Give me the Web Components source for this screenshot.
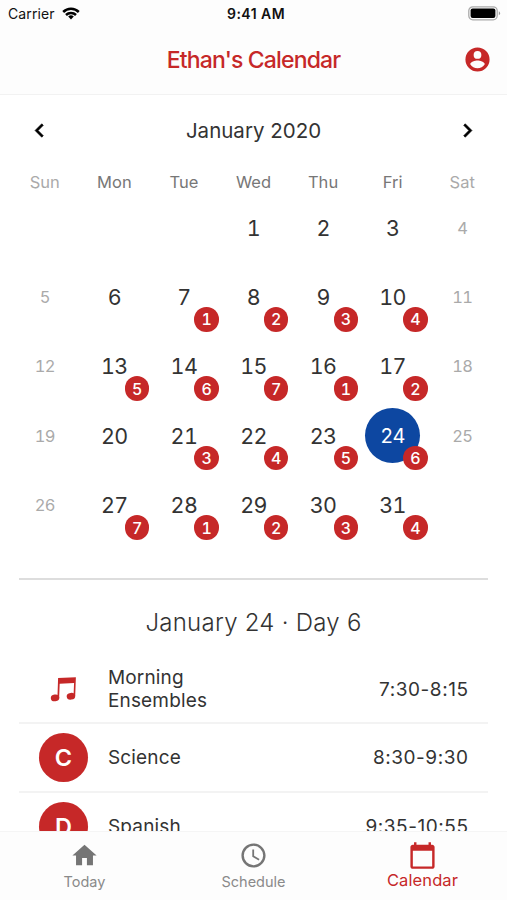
<!DOCTYPE html>
<html lang="en">
<head>
<meta charset="utf-8">
<meta name="viewport" content="width=device-width, initial-scale=1">
<title>Ethan's Calendar</title>
<style>
  body {
    margin: 0;
    font-family: Inter, "Liberation Sans", sans-serif;
    color: #333;
    background: #fff;
    --red: #c62828;
    --blue: #0d47a1;
    --bar: #fdfdfd;
  }
</style>
</head>
<body>
<school-app>
  <status-bar slot="top" carrier="Carrier" time="9:41 AM"></status-bar>
  <title-bar slot="top">Ethan's Calendar</title-bar>

  <month-calendar month="January 2020" first-weekday="3" days="31" selected="24"></month-calendar>

  <day-agenda>
    <span slot="heading">January 24 · Day 6</span>
    <agenda-item time="7:30-8:15" icon="music">Morning Ensembles</agenda-item>
    <agenda-item time="8:30-9:30" letter="C">Science</agenda-item>
    <agenda-item time="9:35-10:55" letter="D">Spanish</agenda-item>
  </day-agenda>

  <tab-bar slot="bottom">
    <tab-item icon="home">Today</tab-item>
    <tab-item icon="clock">Schedule</tab-item>
    <tab-item icon="calendar" active>Calendar</tab-item>
  </tab-bar>
</school-app>

<script>
(function(){
// all on a 24x24 grid
const icons = {
  account: '<path fill-rule="evenodd" d="M12 2a10 10 0 1 0 0 20 10 10 0 0 0 0-20zm0 3a3.2 3.2 0 1 1 0 6.4A3.2 3.2 0 0 1 12 5zm0 14.2a7.2 7.2 0 0 1-6-3.22c.03-1.99 4-3.08 6-3.08s5.97 1.09 6 3.08a7.2 7.2 0 0 1-6 3.22z"/>',
  left: '<path d="M15.41 7.41 14 6l-6 6 6 6 1.41-1.41L10.83 12z" stroke="currentColor" stroke-width=".5"/>',
  right: '<path d="M8.59 16.59 10 18l6-6-6-6-1.41 1.41L13.17 12z" stroke="currentColor" stroke-width=".5"/>',
  home: '<path d="M10 20v-6h4v6h5v-8h3L12 3 2 12h3v8z"/>',
  clock: '<path d="M11.99 2C6.47 2 2 6.48 2 12s4.47 10 9.99 10C17.52 22 22 17.52 22 12S17.52 2 11.99 2zM12 20a8 8 0 1 1 0-16 8 8 0 0 1 0 16zm.5-13H11v6l5.25 3.15.75-1.23-4.5-2.67z"/>',
  calendar: '<path d="M20 3h-1V1h-2v2H7V1H5v2H4c-1.1 0-2 .9-2 2v16c0 1.1.9 2 2 2h16c1.1 0 2-.9 2-2V5c0-1.1-.9-2-2-2zm0 18H4V8h16z"/>',
  music: '<path d="M7.2 1.8 23 1.2 22.4 18h-1.5L21.4 6.2 8.6 6.8 8.1 19.6H6.6z"/><ellipse cx="4.5" cy="19.5" rx="3.8" ry="3" transform="rotate(-8 4.5 19.5)"/><ellipse cx="18.6" cy="18" rx="3.8" ry="3" transform="rotate(-8 18.6 18)"/>'
}

const weekdays = ['Sun', 'Mon', 'Tue', 'Wed', 'Thu', 'Fri', 'Sat']

class SvgIcon extends HTMLElement {
  connectedCallback() {
    this.attachShadow({mode:'open'}).innerHTML = `
      <style>
        :host { display: block; width: 24px; height: 24px; }
        svg { display: block; width: 100%; height: 100%; fill: currentColor; }
      </style>
      <svg viewBox="0 0 24 24">${icons[this.getAttribute('name')]}</svg>
    `
  }
}

class SchoolApp extends HTMLElement {
  connectedCallback() {
    this.attachShadow({mode:'open'}).innerHTML = `
      <style>
        :host { display: flex; flex-direction: column; height: 100vh; overflow: hidden; }
        main { flex: 1; min-height: 0; overflow: hidden; }
      </style>
      <slot name="top"></slot>
      <main><slot></slot></main>
      <slot name="bottom"></slot>
    `
  }
}

class StatusBar extends HTMLElement {
  connectedCallback() {
    this.attachShadow({mode:'open'}).innerHTML = `
      <style>
        :host {
          display: grid;
          grid-template-columns: 1fr auto 1fr;
          align-items: center;
          height: 27px;
          padding: 0 6px 0 8px;
          background: var(--bar);
          color: #111;
          font-size: 14px;
          line-height: 17px;
        }
        .carrier { display: flex; align-items: center; gap: 7px; letter-spacing: .1px; }
        .time { padding-left: 3px; font-weight: 600; letter-spacing: .45px; }
        .battery { justify-self: end; display: block; }
      </style>
      <div class="carrier">
        <span>${this.getAttribute('carrier')}</span>
        <svg width="18" height="13" viewBox="0 0 18 13" fill="none" stroke="#000" stroke-width="2.5">
          <path d="M1.2 5a11 11 0 0 1 15.6 0"/>
          <path d="M4 8a7.1 7.1 0 0 1 10 0"/>
          <path d="M9 12.4 6.2 9.6a4 4 0 0 1 5.6 0z" fill="#000" stroke="none"/>
        </svg>
      </div>
      <div class="time">${this.getAttribute('time')}</div>
      <svg class="battery" width="33" height="15" viewBox="0 0 33 15">
        <rect x=".8" y=".8" width="28.4" height="13" rx="4" fill="none" stroke="#aaa" stroke-width="1.3"/>
        <rect x="2.6" y="2.6" width="24.8" height="9.4" rx="2" fill="#000"/>
        <path d="M30.8 5.3v4a2.2 2.2 0 0 0 0-4z" fill="#999"/>
      </svg>
    `
  }
}

class TitleBar extends HTMLElement {
  connectedCallback() {
    this.attachShadow({mode:'open'}).innerHTML = `
      <style>
        :host {
          display: grid;
          grid-template-columns: 1fr auto 1fr;
          align-items: center;
          box-sizing: border-box;
          height: 68px;
          padding: 0 15px 2px;
          background: var(--bar);
          border-bottom: 1px solid #f2f2f2;
          color: var(--red);
        }
        h1 { margin: 0; grid-column: 2; font-size: 23px; font-weight: 500; letter-spacing: -.85px; line-height: 28px; }
        svg-icon { justify-self: end; width: 29px; height: 29px; }
      </style>
      <h1><slot></slot></h1>
      <svg-icon name="account"></svg-icon>
    `
  }
}

class CalendarDay extends HTMLElement {
  connectedCallback() {
    let badge = this.getAttribute('badge')
    this.attachShadow({mode:'open'}).innerHTML = `
      <style>
        :host { display: grid; place-items: center; height: 69.4px; font-size: 21.5px; letter-spacing: -.6px; font-variant-numeric: tabular-nums; }
        :host([weekend]) { font-size: 16.5px; letter-spacing: -.7px; color: #aaa; }
        .day { position: relative; display: grid; place-items: center; width: 55px; height: 55px; border-radius: 50%; }
        :host([selected]) .day { background: var(--blue); color: #fff; font-size: 20px; }
        .badge {
          position: absolute;
          right: -7.5px;
          bottom: -7px;
          display: grid;
          place-items: center;
          width: 24.5px;
          height: 24.5px;
          border-radius: 50%;
          background: var(--red);
          color: #fff;
          font-size: 16px;
          font-weight: 450;
          letter-spacing: 0;
        }
      </style>
      <div class="day">
        <slot></slot>
        ${badge ? `<span class="badge">${badge}</span>` : ''}
      </div>
    `
  }
}

class MonthCalendar extends HTMLElement {
  connectedCallback() {
    let first = Number(this.getAttribute('first-weekday'))
    let days = Number(this.getAttribute('days'))
    let selected = Number(this.getAttribute('selected'))
    let cells = '<span></span>'.repeat(first)
    // school runs on a 7 day rotation that starts over on the 7th
    let rotation = 0

    for (let day = 1; day <= days; day++) {
      let weekday = (first + day - 1) % 7
      let weekend = weekday === 0 || weekday === 6
      let badge = ''
      // the 20th is a holiday
      if (!weekend && day >= 7 && day !== 20) {
        badge = `badge="${rotation % 7 + 1}"`
        rotation++
      }
      cells += `<calendar-day ${badge} ${weekend ? 'weekend' : ''} ${day === selected ? 'selected' : ''}>${day}</calendar-day>`
    }

    this.attachShadow({mode:'open'}).innerHTML = `
      <style>
        :host { display: block; padding: 0 10px; }
        header { display: flex; align-items: center; justify-content: space-between; height: 71px; padding: 0 16px; color: #000; }
        h2 { margin: 0; font-size: 20.5px; font-weight: 400; color: #333; }
        header svg-icon { width: 27px; height: 27px; }
        .weekdays, .days { display: grid; grid-template-columns: repeat(7, 1fr); }
        .weekdays { height: 27px; line-height: 32px; text-align: center; font-size: 16.5px; color: #777; }
        .weekdays span:first-child, .weekdays span:last-child { color: #aaa; }
      </style>
      <header>
        <svg-icon name="left"></svg-icon>
        <h2>${this.getAttribute('month')}</h2>
        <svg-icon name="right"></svg-icon>
      </header>
      <div class="weekdays">${weekdays.map(d => `<span>${d}</span>`).join('')}</div>
      <div class="days">${cells}</div>
    `
  }
}

class DayAgenda extends HTMLElement {
  connectedCallback() {
    this.attachShadow({mode:'open'}).innerHTML = `
      <style>
        :host { display: block; margin: 38px 19px 0; border-top: 2px solid #ddd; }
        h3 { margin: 0; height: 76px; line-height: 85px; text-align: center; font-size: 24px; font-weight: 300; letter-spacing: .25px; }
      </style>
      <h3><slot name="heading"></slot></h3>
      <slot></slot>
    `
  }
}

class AgendaItem extends HTMLElement {
  connectedCallback() {
    let letter = this.getAttribute('letter')
    this.attachShadow({mode:'open'}).innerHTML = `
      <style>
        :host {
          display: grid;
          grid-template-columns: 49px 1fr auto;
          column-gap: 20px;
          align-items: center;
          box-sizing: border-box;
          height: 68.5px;
          padding: 0 20px;
          border-bottom: 2px solid #f3f3f3;
          font-size: 19px;
          line-height: 23px;
        }
        .avatar { display: grid; place-items: center; height: 49px; border-radius: 50%; color: var(--red); }
        .letter { background: var(--red); color: #fff; font-size: 23.5px; font-weight: 600; }
        .name { max-width: 130px; letter-spacing: .15px; }
        .time { letter-spacing: .55px; margin-right: -.55px; }
        svg-icon { width: 27px; height: 27px; }
      </style>
      <div class="avatar ${letter ? 'letter' : ''}">${letter || `<svg-icon name="${this.getAttribute('icon')}"></svg-icon>`}</div>
      <div class="name"><slot></slot></div>
      <div class="time">${this.getAttribute('time')}</div>
    `
  }
}

class TabBar extends HTMLElement {
  connectedCallback() {
    this.attachShadow({mode:'open'}).innerHTML = `
      <style>
        :host {
          display: grid;
          grid-template-columns: repeat(3, 1fr);
          box-sizing: border-box;
          height: 69px;
          border-top: 1px solid #f5f5f5;
          background: var(--bar);
        }
      </style>
      <slot></slot>
    `
  }
}

class TabItem extends HTMLElement {
  connectedCallback() {
    this.attachShadow({mode:'open'}).innerHTML = `
      <style>
        :host { display: flex; flex-direction: column; align-items: center; padding-top: 9px; font-size: 14.5px; line-height: 18px; color: #8a8a8a; }
        svg-icon { width: 29px; height: 29px; margin-bottom: 3px; color: #757575; }
        :host([active]) { font-size: 16.5px; letter-spacing: .1px; color: var(--red); }
        :host([active]) svg-icon { color: inherit; margin-bottom: 1px; }
      </style>
      <svg-icon name="${this.getAttribute('icon')}"></svg-icon>
      <slot></slot>
    `
  }
}

customElements.define('svg-icon', SvgIcon)
customElements.define('school-app', SchoolApp)
customElements.define('status-bar', StatusBar)
customElements.define('title-bar', TitleBar)
customElements.define('calendar-day', CalendarDay)
customElements.define('month-calendar', MonthCalendar)
customElements.define('day-agenda', DayAgenda)
customElements.define('agenda-item', AgendaItem)
customElements.define('tab-bar', TabBar)
customElements.define('tab-item', TabItem)

}())
</script>
</body>
</html>
